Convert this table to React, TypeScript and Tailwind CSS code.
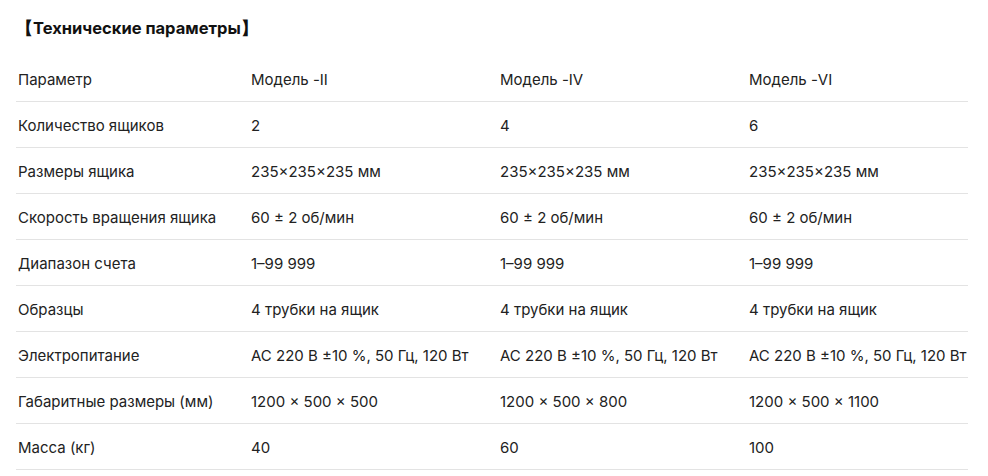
import React from "react";

const header = ["Параметр", "Модель -II", "Модель -IV", "Модель -VI"];
const rows: string[][] = [
  ["Количество ящиков", "2", "4", "6"],
  ["Размеры ящика", "235×235×235 мм", "235×235×235 мм", "235×235×235 мм"],
  ["Скорость вращения ящика", "60 ± 2 об/мин", "60 ± 2 об/мин", "60 ± 2 об/мин"],
  ["Диапазон счета", "1–99 999", "1–99 999", "1–99 999"],
  ["Образцы", "4 трубки на ящик", "4 трубки на ящик", "4 трубки на ящик"],
  ["Электропитание", "AC 220 В ±10 %, 50 Гц, 120 Вт", "AC 220 В ±10 %, 50 Гц, 120 Вт", "AC 220 В ±10 %, 50 Гц, 120 Вт"],
  ["Габаритные размеры (мм)", "1200 × 500 × 500", "1200 × 500 × 800", "1200 × 500 × 1100"],
  ["Масса (кг)", "40", "60", "100"],
];

const cols = ["w-[233px]", "w-[249px]", "w-[249px]", "w-[221px]"];

export default function App() {
  return (
    <div className="w-[988px] h-[476px] bg-white text-[#222] overflow-hidden" style={{ fontFamily: 'Inter, "Noto Sans", sans-serif' }}>
      <div className="pl-[16px] pt-[16px]">
        <div className="h-[24px] flex items-center text-[16.5px] font-bold text-[#111] leading-none">【Технические параметры】</div>
        <div className="mt-[16px] w-[952px] text-[15px]">
          {[header, ...rows].map((r, i) => (
            <div key={i} className="flex h-[46px] items-center pt-[3px] border-b border-[#e3e3e3]">
              {r.map((c, j) => (
                <div key={j} className={`${cols[j]} pl-[2px] whitespace-nowrap overflow-hidden`}>{c}</div>
              ))}
            </div>
          ))}
        </div>
      </div>
    </div>
  );
}
